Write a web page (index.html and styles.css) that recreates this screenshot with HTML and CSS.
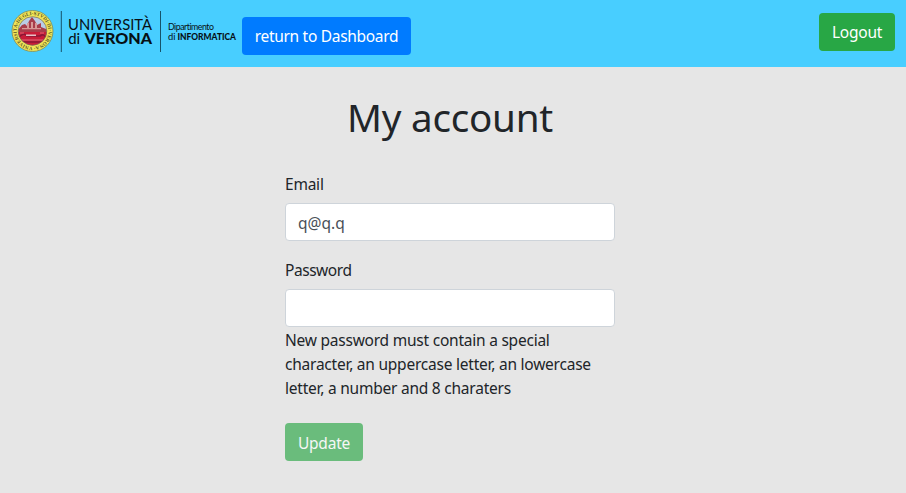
FILE: index.html
```html
<!DOCTYPE html>
<html lang="en">
<head>
<meta charset="utf-8">
<title>My account</title>
<link rel="stylesheet" href="styles.css">
</head>
<body>
<header class="navbar">
  <svg class="logo" width="242" height="67" viewBox="0 0 242 67" role="img" aria-label="Università di Verona">
    <defs>
      <path id="ring" d="M32.5 46.9a15.9 15.9 0 1 1 .1 0"/>
      <clipPath id="seal"><circle cx="32.5" cy="31" r="14.2"/></clipPath>
    </defs>
    <circle cx="32.5" cy="31" r="20.5" fill="#f0e458" stroke="#7f8b58" stroke-width=".8"/>
    <text class="seal-text"><textPath href="#ring" textLength="98">VNIVERSITA·DEGLI·STVDI·DI·VERONA·</textPath></text>
    <g clip-path="url(#seal)">
      <path fill="#b9cce5" d="M17 16h31v31H17z"/>
      <path fill="#a83d4b" d="M17 31l5-6 3-1 2 2 2-5 3-4 3 4 2 4 4-2v4l5 2 4 4v16H17z"/>
      <path fill="#c91c38" d="M17 32h31v15H17z"/>
      <path fill="#d89997" d="M27 23h2v5h-2zm4-1h2v6h-2zm4 1h2v5h-2zM22 28h19v1.2H22z"/>
      <path fill="none" stroke="#8a1736" stroke-width="1.6" d="M19 37q5-5 8-1h13q4-3 6 2M18 42h28"/>
      <path fill="#e5c0c7" d="M26 34.5h10v1.5H26z"/>
      <path fill="none" stroke="#eda0a6" stroke-width=".6" d="M20 33h4m16 0h4M21 40h22"/>
    </g>
    <circle cx="32.5" cy="31" r="14.3" fill="none" stroke="#776e4b" stroke-width=".7"/>
    <path d="M61.3 11v41M160.5 11v41" stroke="#16536a" stroke-width="1"/>
    <text x="68" y="30" class="uni" textLength="84" lengthAdjust="spacingAndGlyphs">UNIVERSITÀ</text>
    <text x="68.2" y="43.8" class="uni" textLength="12" lengthAdjust="spacingAndGlyphs">di</text>
    <text x="84.5" y="43.8" class="uni heavy" textLength="67.5" lengthAdjust="spacingAndGlyphs">VERONA</text>
    <text x="168" y="29.5" class="dept" textLength="46" lengthAdjust="spacing">Dipartimento</text>
    <text x="168" y="39.8" class="dept" textLength="7.5" lengthAdjust="spacingAndGlyphs">di</text>
    <text x="177.5" y="39.8" class="dept heavy" textLength="58.5" lengthAdjust="spacingAndGlyphs">INFORMATICA</text>
  </svg>
  <button class="btn primary">return to Dashboard</button>
  <button class="btn success logout">Logout</button>
</header>
<main class="account">
  <h1>My account</h1>
  <form>
    <label for="email">Email</label>
    <input id="email" type="text" value="q@q.q">
    <label for="password">Password</label>
    <input id="password" type="password">
    <p class="hint">New password must contain a special<br>character, an uppercase letter, an lowercase<br>letter, a number and 8 charaters</p>
    <button class="btn success update" type="button" disabled>Update</button>
  </form>
</main>
</body>
</html>
```
FILE: styles.css
```css
* { box-sizing: border-box; }
body {
  margin: 0;
  min-height: 493px;
  background: #e6e6e6;
  color: #212529;
  font: 400 15.5px/24px "Noto Sans", "Open Sans", sans-serif;
  letter-spacing: -0.23px;
}
.navbar {
  display: flex;
  align-items: flex-start;
  height: 67px;
  background: #48ceff;
}
.logo { flex: none; display: block; }
.uni, .dept { font-family: Lato, sans-serif; letter-spacing: 0; fill: #071015; }
.uni { font-size: 15.2px; }
.dept { font-size: 8.8px; font-variant-ligatures: none; }
.heavy { font-weight: 900; }
.seal-text { font: 700 5px "Liberation Serif", serif; letter-spacing: 0; fill: #5c5a26; }
.btn {
  height: 38px;
  padding: 0;
  border: 0;
  border-radius: 4px;
  color: #fff;
  font: inherit;
  letter-spacing: inherit;
  white-space: nowrap;
}
.primary { width: 169px; margin-top: 17px; background: #007bff; letter-spacing: -0.3px; }
.success { background: #28a745; }
.logout { width: 76px; margin: 13px 11px 0 auto; }
.account { width: 330px; margin-left: 285px; }
h1 {
  margin: 26px 0 31px;
  font-size: 38.6px;
  font-weight: 400;
  line-height: 48px;
  letter-spacing: -0.25px;
  text-align: center;
}
label { display: block; margin-bottom: 7px; }
label[for="password"] { letter-spacing: -0.45px; }
input {
  display: block;
  width: 100%;
  height: 38px;
  margin-bottom: 17px;
  padding: 2px 12px 0;
  border: 1px solid #ced4da;
  border-radius: 4px;
  background: #fff;
  color: #495057;
  font: inherit;
  letter-spacing: 0;
}
#password { margin-bottom: 1px; }
.hint { margin: 0 0 23px; white-space: nowrap; }
.update { display: block; width: 78px; padding-top: 2px; opacity: .65; }
```
